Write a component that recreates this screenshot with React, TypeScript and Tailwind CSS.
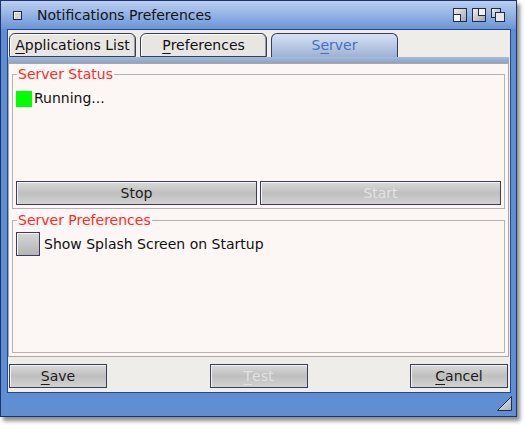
import type { ReactNode } from "react";

type ButtonProps = {
  children: ReactNode;
  disabled?: boolean;
  className?: string;
};

function ToolButton({ children, disabled = false, className = "" }: ButtonProps) {
  return (
    <button
      type="button"
      className={`h-[24px] flex items-center justify-center border border-[#3a3c58] bg-gradient-to-b from-[#dadada] via-[#bfbfbf] to-[#d2d2d2] shadow-[inset_1px_1px_0_#f4f4f4] text-[14px] leading-none ${
        disabled ? "text-[#e2e2e2]" : "text-[#1c1c1c]"
      } ${className}`}
    >
      {children}
    </button>
  );
}

function Key({ children }: { children: ReactNode }) {
  return <span className="underline underline-offset-[3px] decoration-1">{children}</span>;
}

function Tab({ children, active = false }: { children: ReactNode; active?: boolean }) {
  return (
    <div
      className={`w-[127px] h-[24px] flex items-center justify-center rounded-t-[6px] border border-[#383d58] text-[14px] ${
        active
          ? "border-b-0 bg-gradient-to-b from-[#d6e2f4] to-[#9bb2d6] text-[#4570bc]"
          : "bg-[#e8e6e2] text-[#111] shadow-[inset_1px_1px_0_#ffffff,inset_-1px_0_0_#9c9aa4]"
      }`}
    >
      {children}
    </div>
  );
}

function Gadget({ kind }: { kind: "down" | "up" | "depth" }) {
  return (
    <svg width="14" height="14" viewBox="0 0 14 14">
      <defs>
        <linearGradient id={`g-${kind}`} x1="0" y1="0" x2="1" y2="1">
          <stop offset="0" stopColor="#f2f2f2" />
          <stop offset="1" stopColor="#9ea4ae" />
        </linearGradient>
      </defs>
      {kind === "depth" ? (
        <>
          <rect x="0.5" y="0.5" width="9" height="9" fill={`url(#g-${kind})`} stroke="#232c44" />
          <rect x="4.5" y="4.5" width="9" height="9" fill="#e6e6e6" stroke="#232c44" />
        </>
      ) : (
        <>
          <rect x="0.5" y="0.5" width="13" height="13" fill={`url(#g-${kind})`} stroke="#232c44" />
          {kind === "down" ? (
            <rect x="0.5" y="6.5" width="7" height="7" fill="#f4f4f4" stroke="#232c44" />
          ) : (
            <rect x="6.5" y="0.5" width="7" height="7" fill="#f4f4f4" stroke="#232c44" />
          )}
        </>
      )}
    </svg>
  );
}

function Group({ label, children, className = "" }: { label: string; children: ReactNode; className?: string }) {
  return (
    <fieldset className={`mx-[3px] border border-[#b9b1b1] px-[3px] ${className}`}>
      <legend className="ml-[1px] px-[1px] text-[14px] leading-[16px] text-[#ff2a2a]">{label}</legend>
      {children}
    </fieldset>
  );
}

export default function App() {
  return (
    <div className="w-[525px] h-[425px] bg-white font-['DejaVu_Sans',sans-serif]">
      <div className="w-[517px] h-[417px] flex flex-col border border-[#1b3470] bg-[#5f8ed2] shadow-[3px_4px_4px_rgba(0,0,0,0.45)]">
        {/* title bar */}
        <div className="h-[28px] shrink-0 flex items-center pl-[12px] pr-[11px] bg-gradient-to-b from-[#bccff0] to-[#6b95d7]">
          <div className="w-[9px] h-[9px] border border-[#222a40] bg-[#d4d4d4] shadow-[inset_1px_1px_0_#ffffff]" />
          <span className="ml-[15px] text-[14px] text-[#141414]">Notifications Preferences</span>
          <div className="ml-auto flex gap-[5px]">
            <Gadget kind="down" />
            <Gadget kind="up" />
            <Gadget kind="depth" />
          </div>
        </div>

        <div className="flex-1 flex pl-[6px] pr-[5px]">
          <div className="flex-1 flex flex-col border border-[#24468a] bg-[#efedea]">
            {/* tabs */}
            <div className="mt-[3px] pl-[1px] flex gap-[4px]">
              <Tab>
                <Key>A</Key>pplications List
              </Tab>
              <Tab>
                <Key>P</Key>references
              </Tab>
              <Tab active>
                S<Key>e</Key>rver
              </Tab>
            </div>
            <div className="h-[6px] mr-[1px] bg-gradient-to-b from-[#a7bbd9] to-[#8ba3c7]" />

            {/* page */}
            <div className="h-[294px] mr-[1px] flex flex-col border border-[#aea6a6] bg-[#fcf6f5]">
              <Group label="Server Status" className="mt-[2px] h-[143px] pb-[3px]">
                <div className="h-[123px] flex flex-col justify-between">
                  <div className="mt-[6px] flex items-center gap-[2px] text-[14px] text-[#111]">
                    <div className="w-[16px] h-[16px] bg-[#00ff00]" />
                    <span>Running...</span>
                  </div>
                  <div className="flex gap-[3px]">
                    <ToolButton className="flex-1">Stop</ToolButton>
                    <ToolButton className="flex-1" disabled>
                      Start
                    </ToolButton>
                  </div>
                </div>
              </Group>
              <Group label="Server Preferences" className="mt-[3px] h-[141px]">
                <div className="mt-[4px] flex items-center gap-[4px] text-[14px] text-[#111]">
                  <div className="w-[24px] h-[24px] border border-[#3a3c58] bg-gradient-to-b from-[#d6d6d6] to-[#b4b4b4] shadow-[inset_1px_1px_0_#f2f2f2]" />
                  <span>Show Splash Screen on Startup</span>
                </div>
              </Group>
            </div>

            {/* actions */}
            <div className="mt-[7px] pl-[1px] pr-[2px] flex justify-between">
              <ToolButton className="w-[98px]">
                <Key>S</Key>ave
              </ToolButton>
              <ToolButton className="w-[98px]" disabled>
                <Key>T</Key>est
              </ToolButton>
              <ToolButton className="w-[98px]">
                <Key>C</Key>ancel
              </ToolButton>
            </div>
          </div>
        </div>

        {/* bottom border with size gadget */}
        <div className="h-[23px] shrink-0 flex items-start justify-end pt-[3px] pr-[4px]">
          <svg width="15" height="15" viewBox="0 0 15 15">
            <defs>
              <linearGradient id="size-g" x1="0" y1="0" x2="1" y2="1">
                <stop offset="0" stopColor="#f0f0f0" />
                <stop offset="1" stopColor="#a8adb6" />
              </linearGradient>
            </defs>
            <polygon points="0.5,14.5 14.5,14.5 14.5,0.5" fill="url(#size-g)" stroke="#232c44" />
          </svg>
        </div>
      </div>
    </div>
  );
}
